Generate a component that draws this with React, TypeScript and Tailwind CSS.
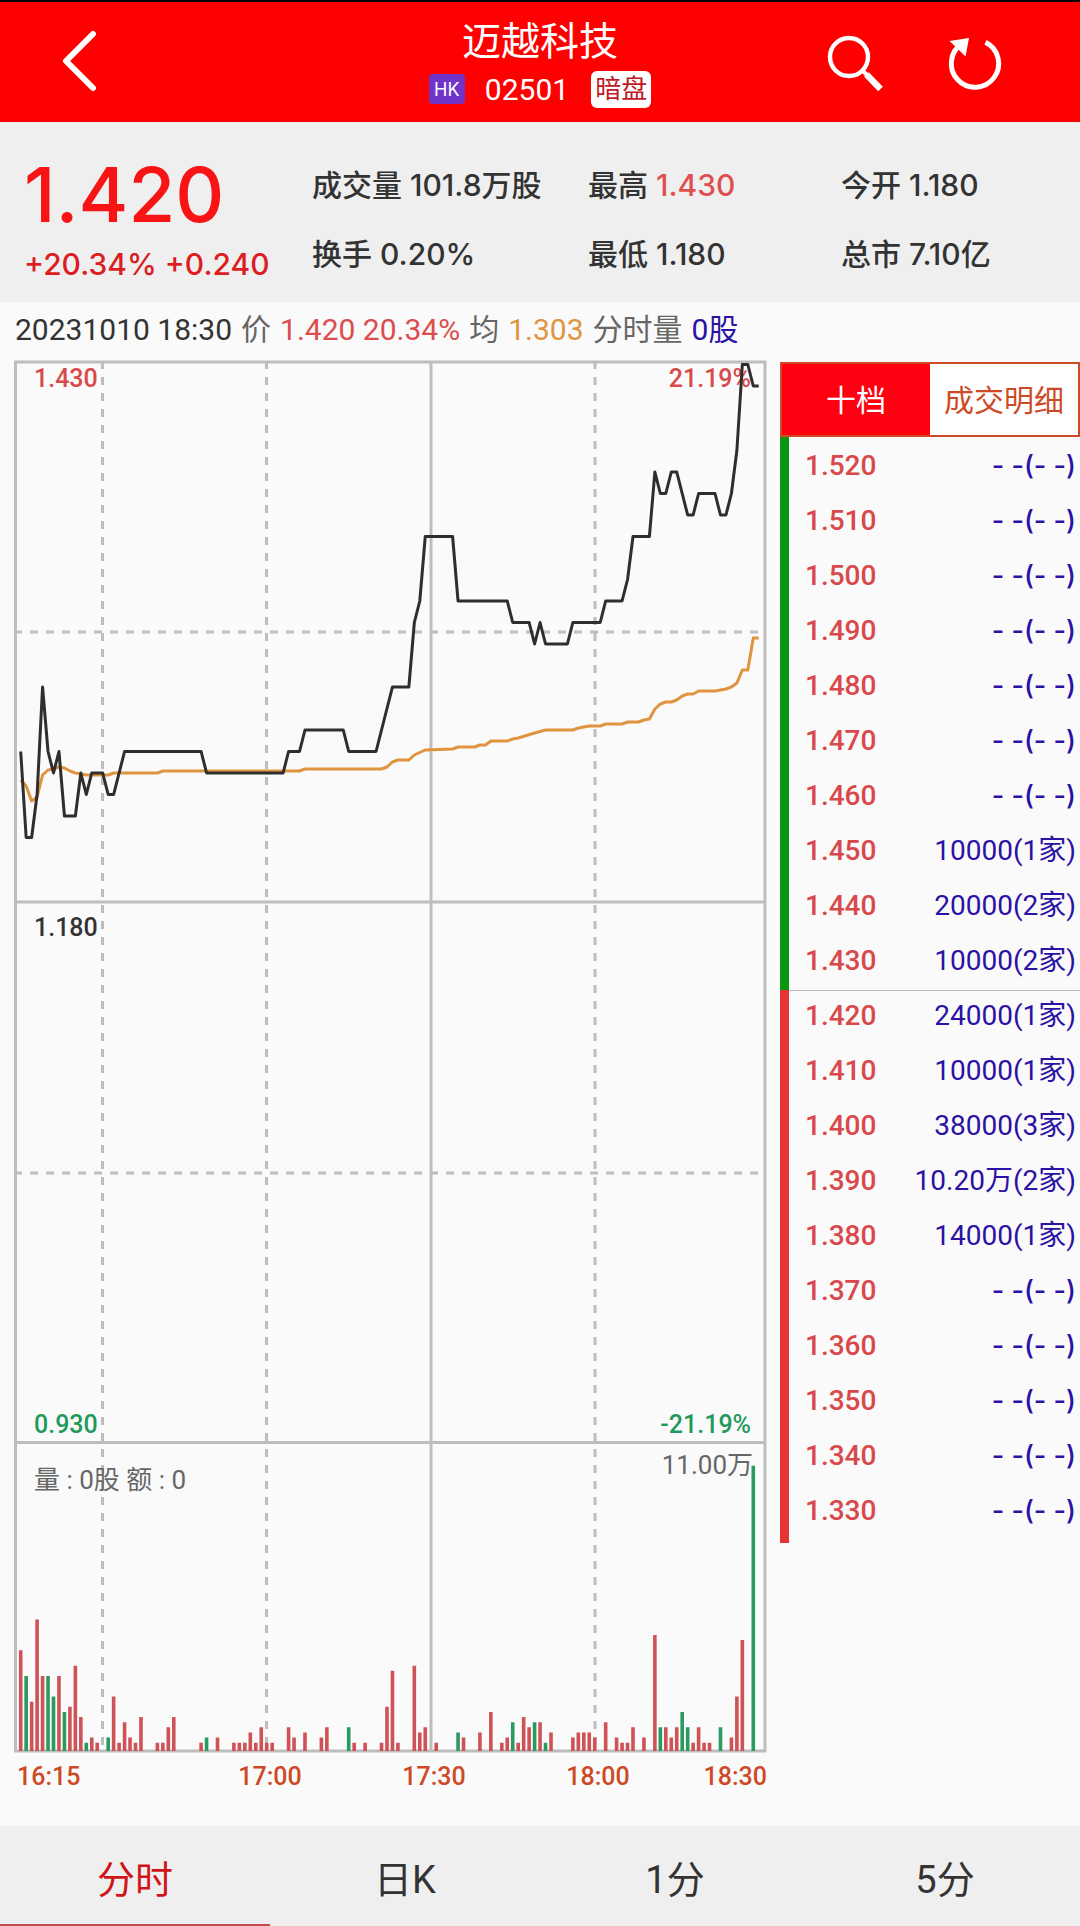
import React from 'react';

const stats = [
  { label: '成交量', value: '101.8万股' },
  { label: '最高', value: '1.430', up: true },
  { label: '今开', value: '1.180' },
  { label: '换手', value: '0.20%' },
  { label: '最低', value: '1.180' },
  { label: '总市', value: '7.10亿' },
];

const orders = [
  { price: '1.520' },
  { price: '1.510' },
  { price: '1.500' },
  { price: '1.490' },
  { price: '1.480' },
  { price: '1.470' },
  { price: '1.460' },
  { price: '1.450', volume: '10000(1家)' },
  { price: '1.440', volume: '20000(2家)' },
  { price: '1.430', volume: '10000(2家)' },
  { price: '1.420', volume: '24000(1家)' },
  { price: '1.410', volume: '10000(1家)' },
  { price: '1.400', volume: '38000(3家)' },
  { price: '1.390', volume: '10.20万(2家)' },
  { price: '1.380', volume: '14000(1家)' },
  { price: '1.370' },
  { price: '1.360' },
  { price: '1.350' },
  { price: '1.340' },
  { price: '1.330' },
];

const periods = ['分时', '日K', '1分', '5分'];

// [minute, ticks below the day high]
const priceLine = [
  [0, 18], [1, 22], [2, 22], [3, 20], [4, 15], [5, 18], [6, 19], [7, 18], [8, 21], [10, 21],
  [11, 19], [12, 20], [13, 19], [15, 19], [16, 20], [17, 20], [18, 19], [19, 18], [33, 18],
  [34, 19], [48, 19], [49, 18], [51, 18], [52, 17], [59, 17], [60, 18], [65, 18], [68, 15],
  [71, 15], [72, 12], [73, 11], [74, 8], [79, 8], [80, 11], [89, 11], [90, 12], [93, 12],
  [94, 13], [95, 12], [96, 13], [100, 13], [101, 12], [106, 12], [107, 11], [110, 11],
  [111, 10], [112, 8], [115, 8], [116, 5], [117, 6], [118, 6], [119, 5], [120, 5], [121, 6],
  [122, 7], [123, 7], [124, 6], [127, 6], [128, 7], [129, 7], [130, 6], [131, 4], [132, 0],
  [133, 0], [134, 1], [135, 1],
];

// [minute, y]
const averageLine = [
  [0, 424], [1, 430], [2, 445], [3, 441], [4, 419], [5, 414], [6, 413], [7, 411], [8, 412],
  [9, 415], [10, 417], [12, 419], [15, 419], [16, 419], [17, 417], [25, 417], [26, 415],
  [51, 415], [52, 413], [66, 413], [67, 411], [68, 406], [69, 404], [71, 404], [72, 399],
  [74, 394], [79, 393], [80, 391], [83, 391], [84, 389], [85, 389], [86, 385], [89, 385],
  [90, 383], [91, 382], [94, 377], [96, 374], [101, 374], [102, 372], [104, 370], [106, 370],
  [107, 368], [110, 368], [111, 366], [113, 366], [114, 364], [115, 363], [116, 353],
  [117, 348], [118, 346], [119, 346], [120, 344], [121, 340], [122, 338], [123, 338],
  [124, 335], [127, 335], [128, 334], [129, 333], [130, 331], [131, 327], [132, 314],
  [133, 314], [134, 282], [135, 282],
];

// [minute, lots]
const buys = [
  [0, 19], [2, 9], [3, 25], [4, 14], [7, 14], [9, 8], [10, 16], [11, 6], [13, 2], [14, 1],
  [17, 10], [18, 1], [19, 5], [20, 2], [21, 1], [22, 6], [25, 1], [26, 1], [27, 4], [28, 6],
  [33, 1], [36, 2], [39, 1], [40, 1], [41, 1], [42, 3], [43, 1], [44, 4], [45, 1], [46, 1],
  [49, 4], [50, 2], [52, 3], [55, 2], [56, 4], [61, 1], [63, 1], [66, 1], [67, 8], [68, 15],
  [69, 1], [72, 16], [73, 3], [74, 4], [76, 1], [81, 2], [84, 3], [86, 7], [88, 1], [89, 2],
  [91, 1], [92, 6], [93, 4], [95, 5], [97, 3], [101, 2], [102, 3], [103, 3], [104, 3],
  [105, 2], [107, 5], [109, 2], [110, 1], [111, 1], [112, 4], [114, 2], [116, 22], [118, 4],
  [119, 2], [120, 4], [123, 1], [124, 4], [125, 1], [126, 1], [130, 2], [131, 10], [132, 21],
];

const sells = [
  [1, 14], [5, 14], [6, 10], [8, 7], [12, 1], [16, 2], [34, 2], [60, 4], [80, 3], [90, 5],
  [94, 5], [96, 1], [117, 4], [121, 7], [122, 4], [128, 4], [134, 55],
];

const minuteX = (minute: number) => 20.7 + minute * 5.467;
const tickY = (tick: number) => 8.5 + tick * 21.5;

const pricePoints = priceLine.map(([m, t]) => `${minuteX(m)},${tickY(t)}`).join(' ');
const averagePoints = averageLine.map(([m, y]) => `${minuteX(m)},${y}`).join(' ');

const toBars = (bars: number[][]) =>
  bars.map(([m, lots]) => `M${minuteX(m)} 1395V${1391.8 - lots * 5.13}`).join('');

const Header = () => (
  <header className="grid grid-cols-[1fr_auto_1fr] h-[122px] bg-[#fe0000] border-t-2 border-black text-white">
    <div className="flex items-center pl-[60px]">
      <button type="button" aria-label="返回">
        <svg className="w-10 h-16" viewBox="0 0 40 64" fill="none" stroke="currentColor" strokeWidth="6" strokeLinecap="round" strokeLinejoin="round">
          <path d="M33 4 6 31l27 27" />
        </svg>
      </button>
    </div>
    <div className="flex flex-col items-center pt-4">
      <h1 className="text-[39px] leading-[48px]">迈越科技</h1>
      <div className="flex items-center h-[46px]">
        <span className="flex items-center justify-center w-9 h-[30px] rounded-sm bg-[#7035c8] font-[Inter] text-[18px]">HK</span>
        <span className="ml-5 text-[30px]">02501</span>
        <span className="ml-[22px] flex items-center justify-center w-[60px] h-[37px] rounded-md bg-white text-[26px] text-[#c01825]">暗盘</span>
      </div>
    </div>
    <div className="flex items-center justify-end gap-[58px] pr-[74px]">
      <button type="button" aria-label="搜索">
        <svg className="w-[68px] h-[68px]" viewBox="0 0 68 68" fill="none" stroke="currentColor">
          <circle cx="29" cy="29" r="19" strokeWidth="4.4" />
          <path d="M42.5 42.5l6 6" strokeWidth="4" />
          <path d="M46.5 46.5l14 14.5" strokeWidth="6.5" />
        </svg>
      </button>
      <button type="button" aria-label="刷新">
        <svg className="w-[60px] h-[60px]" viewBox="0 0 60 60" fill="none" stroke="currentColor">
          <path d="M39.5 10.3A23.7 23.7 0 1 1 16 11.7" strokeWidth="5" />
          <path d="M3.5 9l19.5-3-3.5 18.5-7-7z" fill="currentColor" stroke="none" />
        </svg>
      </button>
    </div>
  </header>
);

const Quote = () => (
  <section className="flex h-[180px] bg-[#efefef] font-[Inter,'Noto_Sans_CJK_SC',sans-serif] font-medium">
    <div className="w-[312px] shrink-0 pl-6 pt-8 text-[#f81414] whitespace-nowrap">
      <div className="text-[76px] leading-[80px]">1.420</div>
      <div className="text-[30px] leading-[60px] text-[#dc1e22]">+20.34% +0.240</div>
    </div>
    <dl className="grid grow grid-cols-[276fr_253fr_239fr] auto-rows-[69px] pt-[29px] text-[30px] text-[#333] whitespace-nowrap">
      {stats.map(({ label, value, up }) => (
        <div key={label} className="flex items-center gap-2">
          <dt>{label}</dt>
          <dd className={up ? 'text-[#e04f4f]' : ''}>{value}</dd>
        </div>
      ))}
    </dl>
  </section>
);

const Chart = () => (
  <svg className="w-full h-auto" viewBox="0 0 780 1440" fill="none" fontSize="25" fontWeight="500">
    <g stroke="#bdbdbd" strokeWidth="3">
      <path d="M15.5 6H765V1395H15.5zM15.5 546H765M15.5 1086.5H765M431 6V1395" />
      <path d="M102.5 5V1395M266.5 5V1395M595 5V1395M14 276H765M14 817H765" strokeDasharray="8 8" />
    </g>
    <g fill="#d8494c">
      <text x="34" y="31">1.430</text>
      <text x="751" y="31" textAnchor="end">21.19%</text>
    </g>
    <text x="34" y="580" fill="#333">1.180</text>
    <g fill="#1f9a5b">
      <text x="34" y="1077">0.930</text>
      <text x="751" y="1077" textAnchor="end">-21.19%</text>
    </g>
    <g fill="#666" fontSize="26" fontWeight="400">
      <text x="34" y="1133">量 : 0股 额 : 0</text>
      <text x="753" y="1118" textAnchor="end">11.00万</text>
    </g>
    <path d={toBars(buys)} stroke="#cf5256" strokeWidth="3.6" />
    <path d={toBars(sells)} stroke="#2a9a60" strokeWidth="3.6" />
    <polyline points={averagePoints} stroke="#e0943f" strokeWidth="3" strokeLinejoin="round" />
    <polyline points={pricePoints} stroke="#2e2e2e" strokeWidth="3" strokeLinejoin="round" />
    <g fill="#cd4a26">
      <text x="17" y="1429">16:15</text>
      <text x="270" y="1429" textAnchor="middle">17:00</text>
      <text x="434" y="1429" textAnchor="middle">17:30</text>
      <text x="598" y="1429" textAnchor="middle">18:00</text>
      <text x="767" y="1429" textAnchor="end">18:30</text>
    </g>
  </svg>
);

const OrderBook = () => (
  <aside className="pt-[6px]">
    <div className="grid grid-cols-2 h-[75px] border-2 border-[#cd4a26] bg-white text-[30px]">
      <button type="button" className="pt-0.5 bg-[#ff0010] text-white">十档</button>
      <button type="button" className="pt-0.5 text-[#cd4a26]">成交明细</button>
    </div>
    <div className="relative flex">
      <div className="flex flex-col w-[9px]">
        <div className="grow bg-[#0a960f]" />
        <div className="grow bg-[#e53433]" />
      </div>
      <div className="grow pt-px pb-[5px]">
        <table className="w-full text-[28px] leading-[55px]">
          <tbody>
            {orders.map(({ price, volume }) => (
              <tr key={price} className="h-[55px]">
                <td className="p-0 pl-4 font-medium text-[#d9484b]">{price}</td>
                {volume ? (
                  <td className="p-0 pr-1 text-right text-[#2a12a4]">{volume}</td>
                ) : (
                  <td className="p-0 pr-1 text-right text-[#2a12a4] font-[Inter] font-medium text-[27px]">- -(- -)</td>
                )}
              </tr>
            ))}
          </tbody>
        </table>
      </div>
      <div className="absolute left-[9px] right-0 top-1/2 h-px bg-[#bdbdbd]" />
    </div>
  </aside>
);

const App = () => (
  <div className="flex flex-col min-h-screen bg-[#fafafa] font-[Roboto,'Noto_Sans_CJK_SC',sans-serif]">
    <Header />
    <Quote />
    <p className="flex items-center gap-[9px] h-[54px] px-[15px] text-[30px] text-[#333] whitespace-nowrap">
      <span>20231010 18:30</span>
      <span className="text-[#666]">价</span>
      <span className="text-[#dc4d4f]">1.420 20.34%</span>
      <span className="text-[#666]">均</span>
      <span className="text-[#e0943f]">1.303</span>
      <span className="text-[#666]">分时量</span>
      <span className="text-[#2a12a4]">0股</span>
    </p>
    <main className="grid grid-cols-[1fr_300px] grow items-start">
      <Chart />
      <OrderBook />
    </main>
    <nav className="grid grid-cols-4 h-[100px] bg-[#efefef] text-[38px] text-[#333]">
      {periods.map((period, index) => (
        <button
          key={period}
          type="button"
          className={`pt-2.5 border-b-2 ${index === 0 ? 'border-[#c04a52] text-[#d01418]' : 'border-transparent'}`}
        >
          {period}
        </button>
      ))}
    </nav>
  </div>
);

export default App;
